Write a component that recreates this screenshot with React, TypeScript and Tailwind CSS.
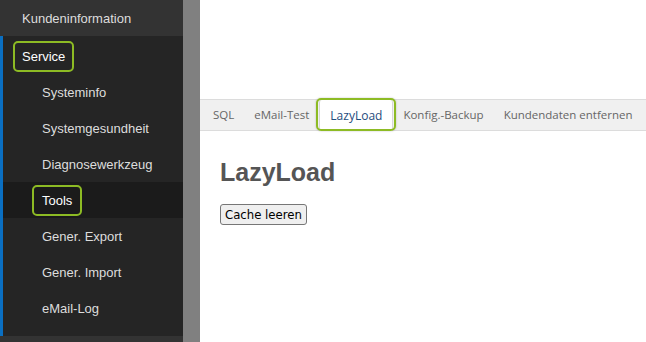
import React from "react";

const items = [
  "Systeminfo",
  "Systemgesundheit",
  "Diagnosewerkzeug",
  "Tools",
  "Gener. Export",
  "Gener. Import",
  "eMail-Log",
];

const tabs = ["SQL", "eMail-Test", "LazyLoad", "Konfig.-Backup", "Kundendaten entfernen"];

export default function App() {
  return (
    <div className="flex w-[646px] h-[342px] overflow-hidden bg-white">
      <aside
        className="w-[183px] shrink-0 flex flex-col bg-[#333333] text-[13px] text-[#dddddd]"
        style={{ fontFamily: '"Liberation Sans", Arial, sans-serif' }}
      >
        <div className="h-[36px] flex items-center pl-[22px] pt-px bg-[#333333]">Kundeninformation</div>
        <div className="border-l-[3px] border-[#0a6fc2] bg-[#252525] pt-[2px] pb-[10px]">
          <div className="h-[36px] flex items-center pl-[10px] pt-px">
            <span className="relative px-[7px] py-[4px] rounded-[5px] border-2 border-[#8dbb24] text-white">
              Service
            </span>
          </div>
          {items.map((it) => (
            <div
              key={it}
              className={
                "h-[36px] flex items-center pt-px " +
                (it === "Tools" ? "bg-[#1b1b1b] pl-[29px]" : "pl-[39px]")
              }
            >
              {it === "Tools" ? (
                <span className="px-[8px] py-[4px] rounded-[5px] border-2 border-[#8dbb24] text-white">
                  Tools
                </span>
              ) : (
                it
              )}
            </div>
          ))}
        </div>
        <div className="flex-1 bg-[#333333]" />
      </aside>
      <div className="w-[17px] shrink-0 bg-[#808080]" />
      <main className="flex-1 min-w-0 flex flex-col pt-[99px] overflow-hidden">
        <div
          className="h-[32px] flex items-stretch bg-[#f0f0f0] border-t border-b border-[#dcdcdc] pl-[3px] text-[11.5px] text-[#666666] whitespace-nowrap"
          style={{ fontFamily: '"Open Sans", sans-serif' }}
        >
          {tabs.map((t) =>
            t === "LazyLoad" ? (
              <div key={t} className="relative -mb-px flex shrink-0">
                <div className="flex items-center px-[10px] bg-white border-l border-r border-[#d8d8d8] text-[#1f4d7d] rounded-t-[3px] text-[12px]">
                  {t}
                </div>
                <div className="absolute -left-[3px] -right-[3px] -top-[2px] bottom-0 rounded-[5px] border-2 border-[#8dbb24] shadow-[0_0_2px_rgba(0,0,0,0.25)]" />
              </div>
            ) : (
              <div key={t} className="flex items-center px-[10px] shrink-0">
                {t}
              </div>
            )
          )}
        </div>
        <div className="pl-[20px] pt-[27px]" style={{ fontFamily: '"Liberation Sans", Arial, sans-serif' }}>
          <h1 className="text-[25px] font-bold text-[#555555] leading-[28px]">LazyLoad</h1>
          <button
            className="mt-[18px] px-[4px] h-[21px] text-[13px] text-black bg-[#efefef] border border-[#767676] rounded-[3px]"
            style={{ fontFamily: '"DejaVu Sans Condensed", "Liberation Sans", sans-serif' }}
          >
            Cache leeren
          </button>
        </div>
      </main>
    </div>
  );
}
